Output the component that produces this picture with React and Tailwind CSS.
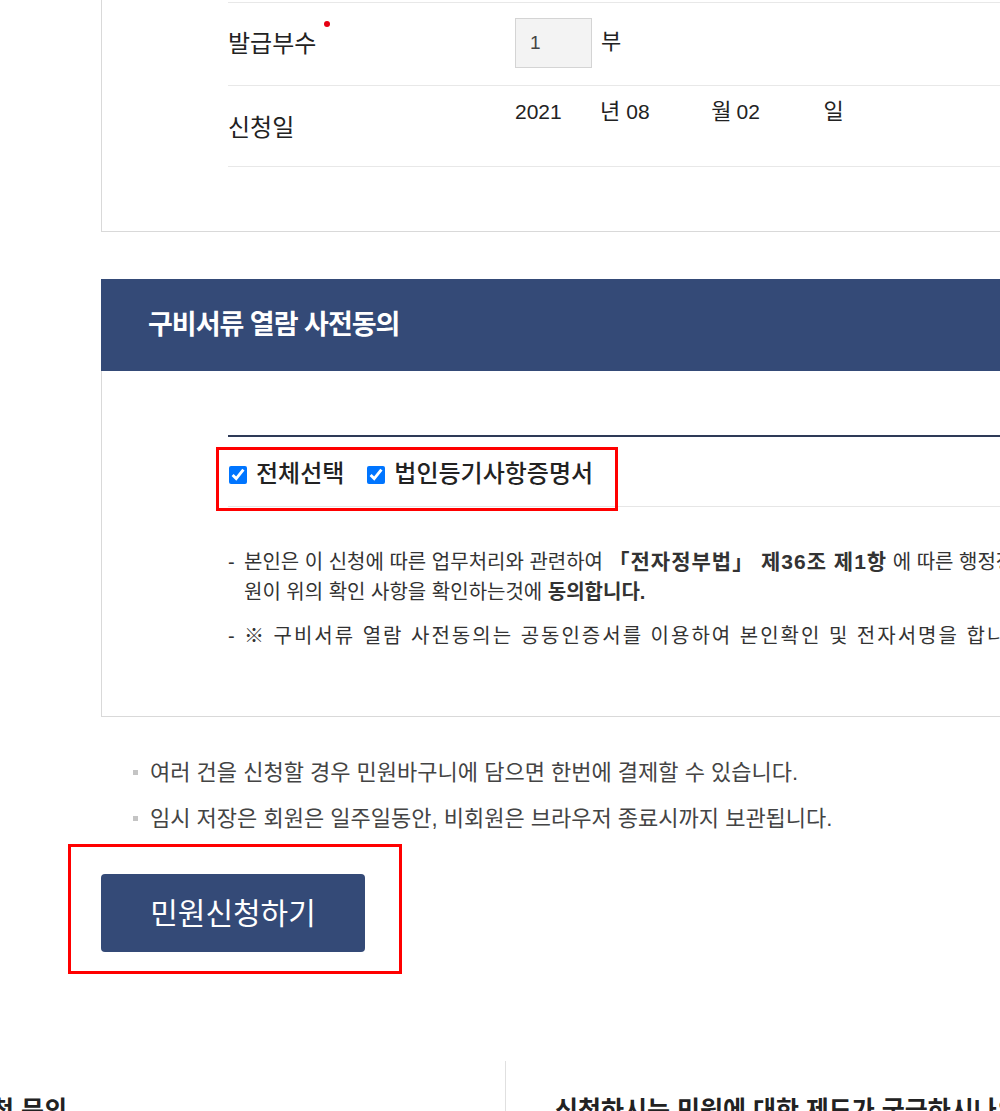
import React from "react";

const ko = "font-['Liberation_Sans','Noto_Sans_CJK_KR',sans-serif]";

function Note({ children }) {
  return (
    <li className="flex items-center h-[30px]">
      <span className="w-[5px] h-[5px] bg-[#c4c4c4] mr-[12px]" />
      <span>{children}</span>
    </li>
  );
}

export default function App() {
  return (
    <div className={`w-[1000px] h-[1111px] overflow-hidden bg-white text-[#333] ${ko}`}>
      <div className="w-[1400px] pl-[101px]">
        {/* issue form panel */}
        <section className="border-x border-b border-[#d9d9d9] pt-[2px] pl-[126px] pb-[64px]">
          <div className="flex items-center h-[83px] border-t border-[#e8e8e8]">
            <div className="w-[287px] text-[24px] leading-[36px] text-[#222] relative">
              발급부수
              <span className="absolute left-[96px] top-[-5px] w-[6px] h-[6px] rounded-full bg-[#e60012]" />
            </div>
            <div className="w-[77px] h-[50px] border border-[#d4d4d4] bg-[#f3f3f3] flex items-center pl-[14px] text-[19px] text-[#444] mt-[-2px]">
              1
            </div>
            <span className="ml-[9px] text-[22px] text-[#222] mt-[-6px]">부</span>
          </div>
          <div className="flex h-[82px] border-y border-[#e8e8e8]">
            <div className="w-[287px] text-[24px] text-[#222] flex items-center pt-[4px]">신청일</div>
            <div className="flex items-start pt-[13px] text-[21px] leading-[26px] text-[#222]">
              <span className="w-[85px]">2021</span>
              <span className="text-[22px]">년</span>
              <span className="w-[85px] ml-[6px]">08</span>
              <span className="text-[22px]">월</span>
              <span className="w-[87px] ml-[5px]">02</span>
              <span className="text-[22px]">일</span>
            </div>
          </div>
        </section>

        {/* consent panel */}
        <section className="mt-[47px]">
          <div className="h-[92px] bg-[#344a77] flex items-center pl-[47px]">
            <h2 className="text-white text-[27px] font-bold tracking-[-1px]">구비서류 열람 사전동의</h2>
          </div>
          <div className="border-x border-b border-[#d9d9d9] pl-[126px] pt-[64px] pb-[65px]">
            <div className="border-t-2 border-[#2e3a57]">
              <div className="relative flex items-center h-[70px] border-b border-[#e6e6e6] pt-[4px]">
                <label className="flex items-center gap-[9px] text-[24px] font-medium text-[#222]">
                  <input type="checkbox" defaultChecked className="w-[18px] h-[18px] ml-[1px] mt-[3px]" />
                  전체선택
                </label>
                <label className="flex items-center gap-[9px] text-[24px] font-medium text-[#222] ml-[23px]">
                  <input type="checkbox" defaultChecked className="w-[18px] h-[18px] mt-[3px]" />
                  법인등기사항증명서
                </label>
                <div className="absolute left-[-12px] top-[10px] w-[402px] h-[64px] border-[3px] border-[#f00]" />
              </div>
              <div className="mt-[40px] text-[20px] leading-[30px] text-[#333] whitespace-nowrap">
                <p className="flex">
                  <span className="w-[16px]">-</span>
                  <span>
                    본인은 이 신청에 따른 업무처리와 관련하여{" "}
                    <b className="text-[21px] tracking-[1px]">「전자정부법」 제36조 제1항</b> 에 따른 행정정보의 공동이용을 통하여 담당 공무
                    <br />
                    원이 위의 확인 사항을 확인하는것에 <b>동의합니다.</b>
                  </span>
                </p>
                <p className="flex mt-[14px]">
                  <span className="w-[16px]">-</span>
                  <span className="tracking-[2px]">※ 구비서류 열람 사전동의는 공동인증서를 이용하여 본인확인 및 전자서명을 합니다.</span>
                </p>
              </div>
            </div>
          </div>
        </section>

        {/* notes */}
        <ul className="mt-[40px] pl-[32px] flex flex-col gap-[16px] text-[22px] text-[#444]">
          <Note>여러 건을 신청할 경우 민원바구니에 담으면 한번에 결제할 수 있습니다.</Note>
          <Note>임시 저장은 회원은 일주일동안, 비회원은 브라우저 종료시까지 보관됩니다.</Note>
        </ul>

        <div className="relative mt-[41px] w-[264px]">
          <button className="w-[264px] h-[78px] rounded-[4px] bg-[#344a77] text-white text-[30px]">
            민원신청하기
          </button>
          <div className="absolute left-[-33px] top-[-30px] w-[334px] h-[130px] border-[3px] border-[#f00]" />
        </div>

        {/* help section */}
        <div className="mt-[109px] ml-[-101px] flex">
          <div className="w-[506px] border-r border-[#e0e0e0] pt-[31px] overflow-hidden">
            <p className="ml-[-78px] text-[25px] font-bold text-[#222] whitespace-nowrap">민원신청 문의</p>
          </div>
          <div className="pl-[49px] pt-[31px]">
            <p className="text-[25px] font-bold text-[#222] whitespace-nowrap">
              신청하시는 민원에 대한 제도가 궁금하시나요?
            </p>
          </div>
        </div>
      </div>
    </div>
  );
}
